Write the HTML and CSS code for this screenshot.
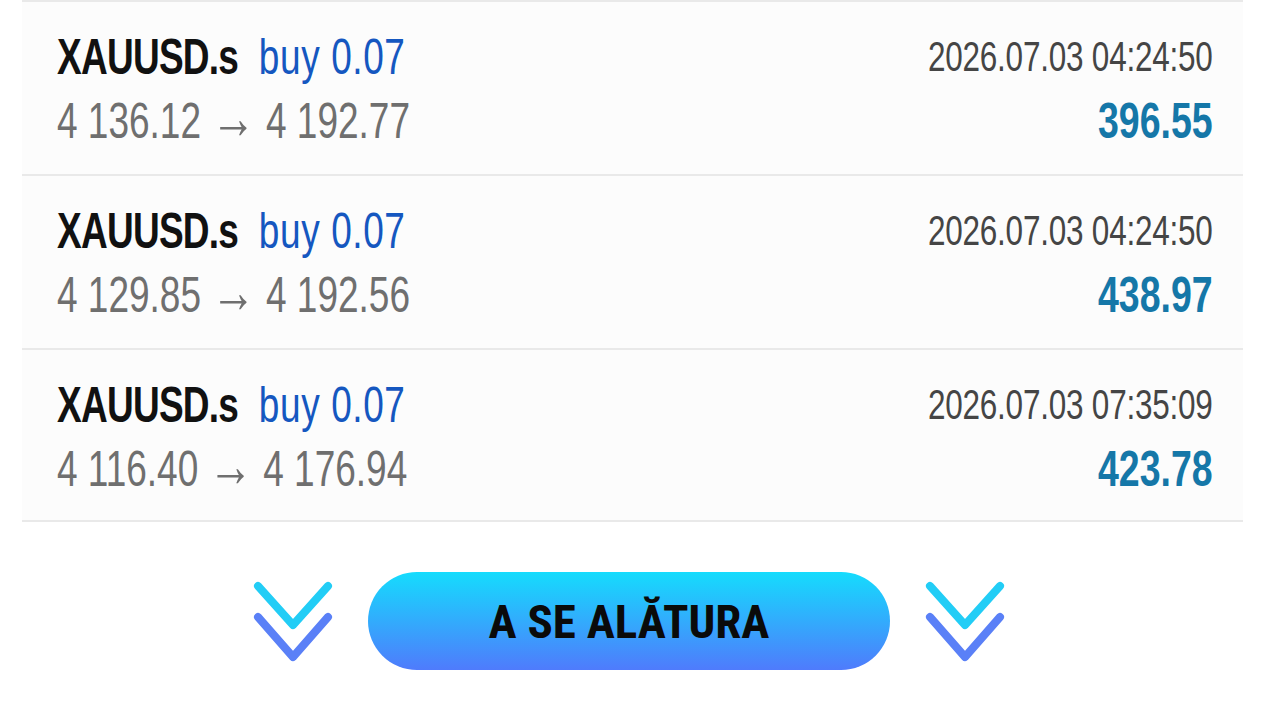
FILE: index.html
```html
<!DOCTYPE html>
<html lang="ro">
<head>
  <meta charset="UTF-8" />
  <meta name="viewport" content="width=device-width, initial-scale=1.0"/>
  <title>Tranzacții închise</title>
  <link rel="stylesheet" href="styles.css">
</head>
<body>
  <div class="deals">
    <div class="deal">
      <div class="left">
        <div class="title"><span class="symbol">XAUUSD.s</span> <span class="side">buy 0.07</span></div>
        <div class="prices">4 136.12 <span class="arrow">→</span> 4 192.77</div>
      </div>
      <div class="right">
        <div class="time">2026.07.03 04:24:50</div>
        <div class="profit">396.55</div>
      </div>
    </div>
    <div class="deal">
      <div class="left">
        <div class="title"><span class="symbol">XAUUSD.s</span> <span class="side">buy 0.07</span></div>
        <div class="prices">4 129.85 <span class="arrow">→</span> 4 192.56</div>
      </div>
      <div class="right">
        <div class="time">2026.07.03 04:24:50</div>
        <div class="profit">438.97</div>
      </div>
    </div>
    <div class="deal">
      <div class="left">
        <div class="title"><span class="symbol">XAUUSD.s</span> <span class="side">buy 0.07</span></div>
        <div class="prices">4 116.40 <span class="arrow">→</span> 4 176.94</div>
      </div>
      <div class="right">
        <div class="time">2026.07.03 07:35:09</div>
        <div class="profit">423.78</div>
      </div>
    </div>
  </div>

  <div class="join">
    <svg class="chevrons" viewBox="0 0 86 86" width="86" height="86">
      <polyline points="8,8 43,47 78,8" stroke="#22cdf6" />
      <polyline points="8,39 43,79 78,39" stroke="#5a80f7" />
    </svg>
    <button class="join-btn">A SE ALĂTURA</button>
    <svg class="chevrons" viewBox="0 0 86 86" width="86" height="86">
      <polyline points="8,8 43,47 78,8" stroke="#22cdf6" />
      <polyline points="8,39 43,79 78,39" stroke="#5a80f7" />
    </svg>
  </div>
</body>
</html>
```

FILE: styles.css
```css
body {
  margin: 0;
  background: #fff;
  font-family: "Liberation Sans", Arial, sans-serif;
}

.deals {
  margin: 0 37px 0 22px;
}

.deal {
  display: flex;
  justify-content: space-between;
  height: 174px;
  box-sizing: border-box;
  padding: 23px 30px 0 35px;
  background: #fcfcfc;
  border-top: 2px solid #e9e9e9;
}

.deal:last-child {
  border-bottom: 2px solid #e9e9e9;
}

/* the text is narrow, like a condensed face */
.left, .right {
  line-height: 64px;
  white-space: nowrap;
}

.left {
  transform: scaleX(0.74);
  transform-origin: left;
}

.right {
  text-align: right;
  transform: scaleX(0.75);
  transform-origin: right;
}

.title {
  font-size: 50px;
}

.symbol {
  font-weight: bold;
  color: #111;
  letter-spacing: -1px;
}

.side {
  color: #1557c0;
  margin-left: 14px;
  letter-spacing: 0.8px;
}

.prices {
  font-size: 50px;
  color: #6f6f6f;
}

.arrow {
  font-size: 60px;
  line-height: 0;
}

.time {
  font-size: 42px;
  color: #454545;
  letter-spacing: -0.3px;
}

.profit {
  font-size: 50px;
  font-weight: bold;
  color: #1577a8;
}

.join {
  display: flex;
  justify-content: center;
  align-items: center;
  gap: 32px;
  margin-top: 50px;
  padding-right: 22px;
}

.chevrons polyline {
  fill: none;
  stroke-width: 8;
  stroke-linecap: round;
  stroke-linejoin: round;
}

.join-btn {
  width: 522px;
  height: 98px;
  border: none;
  border-radius: 49px;
  background: linear-gradient(#15dcfd, #4f7bfc);
  color: #0a0a0a;
  font-family: "Roboto Condensed", "Liberation Sans", sans-serif;
  font-size: 47px;
  font-weight: bold;
  cursor: pointer;
}
```
